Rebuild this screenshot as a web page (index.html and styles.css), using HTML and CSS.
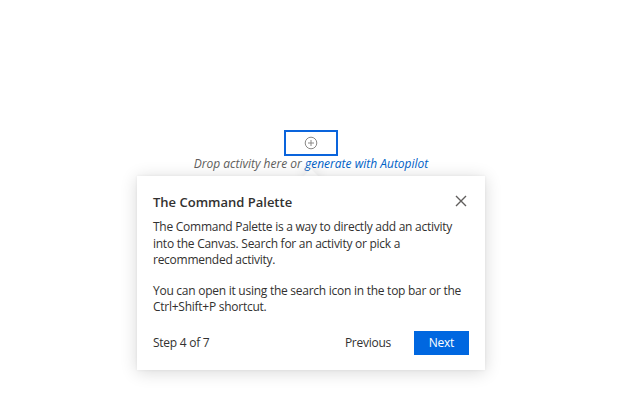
FILE: index.html
```html
<!DOCTYPE html>
<html>
<head>
<meta charset="utf-8">
<link rel="stylesheet" href="styles.css">
</head>
<body>
<div class="canvas">
  <div class="drop-target">
    <svg class="add-icon" width="14" height="14" viewBox="0 0 14 14"><circle cx="7" cy="7" r="5.8" fill="none" stroke="#8a8886" stroke-width="1"/><path d="M7 4v6M4 7h6" stroke="#8a8886" stroke-width="1"/></svg>
  </div>
  <div class="drop-hint">Drop activity here or <span class="link">generate with Autopilot</span></div>
  <div class="callout">
    <div class="beak"></div>
    <div class="callout-body">
      <div class="header">
        <div class="title">The Command Palette</div>
        <svg class="close" width="12" height="12" viewBox="0 0 12 12"><path d="M1 1L11 11M11 1L1 11" stroke="#605e5c" stroke-width="1.4"/></svg>
      </div>
      <p class="text">The Command Palette is a way to directly add an activity into the Canvas. Search for an activity or pick a recommended activity.</p>
      <p class="text">You can open it using the search icon in the top bar or the Ctrl+Shift+P shortcut.</p>
      <div class="footer">
        <span class="step">Step 4 of 7</span>
        <div class="actions">
          <button class="btn-prev">Previous</button>
          <button class="btn-next">Next</button>
        </div>
      </div>
    </div>
  </div>
</div>
</body>
</html>
```
FILE: styles.css
```css
html, body {
  margin: 0;
  padding: 0;
  background: #ffffff;
}
body {
  font-family: "Open Sans", "Noto Sans", sans-serif;
  color: #323130;
  min-height: 407px;
}
.canvas {
  width: 622px;
  display: flex;
  flex-direction: column;
  align-items: center;
  padding-top: 130px;
}
.drop-target {
  width: 50px;
  height: 22px;
  border: 2px solid #0a64dc;
  display: flex;
  align-items: center;
  justify-content: center;
}
.drop-hint {
  font-style: italic;
  font-size: 12px;
  color: #605e5c;
  line-height: 16px;
}
.link {
  color: #0062c8;
}
.callout {
  position: relative;
  margin-top: 4px;
  width: 348px;
}
.beak {
  position: absolute;
  left: 169px;
  top: -5px;
  width: 10px;
  height: 10px;
  background: #fff;
  transform: rotate(45deg);
  box-shadow: 0 0 14px rgba(0,0,0,.16);
}
.callout-body {
  position: relative;
  background: #fff;
  box-shadow: 0 2px 16px rgba(0,0,0,.16), 0 0 3px rgba(0,0,0,.06);
  padding: 16px 16px 15px 16px;
  letter-spacing: -0.26px;
}
.header {
  display: flex;
  justify-content: space-between;
  align-items: center;
  height: 20px;
}
.title {
  font-size: 13px;
  font-weight: 600;
  line-height: 20px;
  letter-spacing: 0;
}
.close {
  margin-right: 2px;
  margin-top: -3px;
}
.text {
  margin: 7px 0 0 0;
  font-size: 12px;
  line-height: 16.5px;
}
.text + .text {
  margin-top: 14px;
}
.footer {
  display: flex;
  justify-content: space-between;
  align-items: center;
  margin-top: 15px;
}
.step {
  font-size: 12px;
}
.actions {
  display: flex;
  align-items: center;
  gap: 8px;
}
button {
  font-family: inherit;
  font-size: 12px;
  letter-spacing: -0.26px;
  border: none;
  height: 24px;
  cursor: pointer;
}
.btn-prev {
  background: transparent;
  color: #323130;
  padding: 0 15px;
}
.btn-next {
  background: #0067e0;
  color: #fff;
  width: 55px;
  padding: 0;
}
```
